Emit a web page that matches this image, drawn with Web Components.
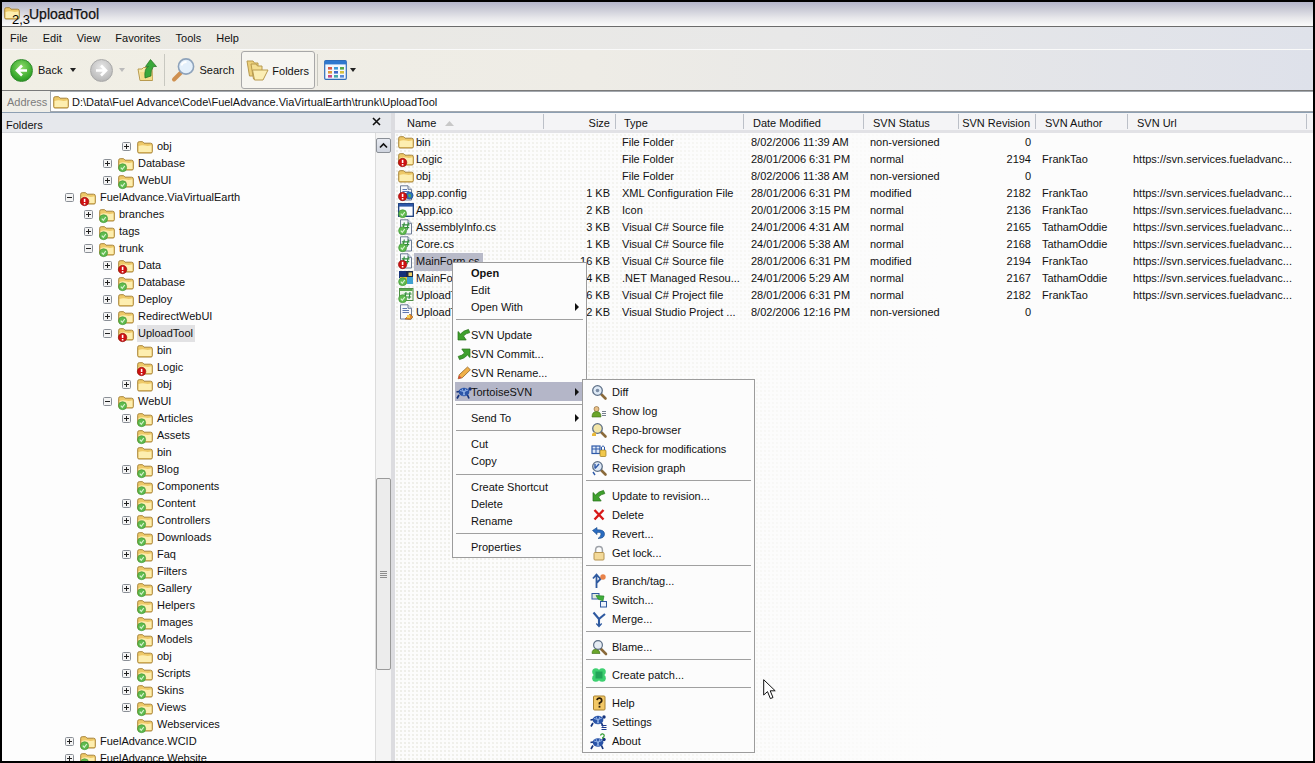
<!DOCTYPE html>
<html>
<head>
<meta charset="utf-8">
<title>UploadTool</title>
<style>
  html, body { margin: 0; height: 763px; overflow: hidden; background: #000; }
  body { padding: 2px 2px 2px 2px; box-sizing: border-box; font: 11px "Liberation Sans", "Noto Sans", sans-serif; color: #111; }
</style>
</head>
<body>
<explorer-window>
  <title-bar>UploadTool</title-bar>
  <menu-bar>
    <span>File</span><span>Edit</span><span>View</span><span>Favorites</span><span>Tools</span><span>Help</span>
  </menu-bar>
  <tool-bar></tool-bar>
  <address-bar>D:\Data\Fuel Advance\Code\FuelAdvance.ViaVirtualEarth\trunk\UploadTool</address-bar>
  <tree-pane slot="tree">
    <tree-row depth="3" toggle="plus">obj</tree-row>
    <tree-row depth="2" toggle="plus" badge="ok">Database</tree-row>
    <tree-row depth="2" toggle="plus" badge="ok">WebUI</tree-row>
    <tree-row depth="0" toggle="minus" badge="err">FuelAdvance.ViaVirtualEarth</tree-row>
    <tree-row depth="1" toggle="plus" badge="ok">branches</tree-row>
    <tree-row depth="1" toggle="plus" badge="ok">tags</tree-row>
    <tree-row depth="1" toggle="minus" badge="ok">trunk</tree-row>
    <tree-row depth="2" toggle="plus" badge="err">Data</tree-row>
    <tree-row depth="2" toggle="plus" badge="ok">Database</tree-row>
    <tree-row depth="2" toggle="plus">Deploy</tree-row>
    <tree-row depth="2" toggle="plus" badge="ok">RedirectWebUI</tree-row>
    <tree-row depth="2" toggle="minus" badge="err" selected>UploadTool</tree-row>
    <tree-row depth="3">bin</tree-row>
    <tree-row depth="3" badge="err">Logic</tree-row>
    <tree-row depth="3" toggle="plus">obj</tree-row>
    <tree-row depth="2" toggle="minus" badge="ok">WebUI</tree-row>
    <tree-row depth="3" toggle="plus" badge="ok">Articles</tree-row>
    <tree-row depth="3" badge="ok">Assets</tree-row>
    <tree-row depth="3">bin</tree-row>
    <tree-row depth="3" toggle="plus" badge="ok">Blog</tree-row>
    <tree-row depth="3" badge="ok">Components</tree-row>
    <tree-row depth="3" toggle="plus" badge="ok">Content</tree-row>
    <tree-row depth="3" toggle="plus" badge="ok">Controllers</tree-row>
    <tree-row depth="3" badge="ok">Downloads</tree-row>
    <tree-row depth="3" toggle="plus" badge="ok">Faq</tree-row>
    <tree-row depth="3" badge="ok">Filters</tree-row>
    <tree-row depth="3" toggle="plus" badge="ok">Gallery</tree-row>
    <tree-row depth="3" badge="ok">Helpers</tree-row>
    <tree-row depth="3" badge="ok">Images</tree-row>
    <tree-row depth="3" badge="ok">Models</tree-row>
    <tree-row depth="3" toggle="plus">obj</tree-row>
    <tree-row depth="3" toggle="plus" badge="ok">Scripts</tree-row>
    <tree-row depth="3" toggle="plus" badge="ok">Skins</tree-row>
    <tree-row depth="3" toggle="plus" badge="ok">Views</tree-row>
    <tree-row depth="3" badge="ok">Webservices</tree-row>
    <tree-row depth="0" toggle="plus" badge="ok">FuelAdvance.WCID</tree-row>
    <tree-row depth="0" toggle="plus" badge="ok">FuelAdvance.Website</tree-row>
  </tree-pane>
  <file-list slot="list">
    <file-row icon="folder"><span>bin</span><span></span><span>File Folder</span><span>8/02/2006 11:39 AM</span><span>non-versioned</span><span>0</span><span></span><span></span></file-row>
    <file-row icon="folder" badge="err"><span>Logic</span><span></span><span>File Folder</span><span>28/01/2006 6:31 PM</span><span>normal</span><span>2194</span><span>FrankTao</span><span>https://svn.services.fueladvanc...</span></file-row>
    <file-row icon="folder"><span>obj</span><span></span><span>File Folder</span><span>8/02/2006 11:38 AM</span><span>non-versioned</span><span>0</span><span></span><span></span></file-row>
    <file-row icon="config" badge="err"><span>app.config</span><span>1 KB</span><span>XML Configuration File</span><span>28/01/2006 6:31 PM</span><span>modified</span><span>2182</span><span>FrankTao</span><span>https://svn.services.fueladvanc...</span></file-row>
    <file-row icon="ico" badge="ok"><span>App.ico</span><span>2 KB</span><span>Icon</span><span>20/01/2006 3:15 PM</span><span>normal</span><span>2136</span><span>FrankTao</span><span>https://svn.services.fueladvanc...</span></file-row>
    <file-row icon="cs" badge="ok"><span>AssemblyInfo.cs</span><span>3 KB</span><span>Visual C# Source file</span><span>24/01/2006 4:31 AM</span><span>normal</span><span>2165</span><span>TathamOddie</span><span>https://svn.services.fueladvanc...</span></file-row>
    <file-row icon="cs" badge="ok"><span>Core.cs</span><span>1 KB</span><span>Visual C# Source file</span><span>24/01/2006 5:38 AM</span><span>normal</span><span>2168</span><span>TathamOddie</span><span>https://svn.services.fueladvanc...</span></file-row>
    <file-row icon="cs" badge="err" selected><span>MainForm.cs</span><span>16 KB</span><span>Visual C# Source file</span><span>28/01/2006 6:31 PM</span><span>modified</span><span>2194</span><span>FrankTao</span><span>https://svn.services.fueladvanc...</span></file-row>
    <file-row icon="resx" badge="ok"><span>MainFor</span><span>24 KB</span><span>.NET Managed Resou...</span><span>24/01/2006 5:29 AM</span><span>normal</span><span>2167</span><span>TathamOddie</span><span>https://svn.services.fueladvanc...</span></file-row>
    <file-row icon="csproj" badge="ok"><span>UploadT</span><span>6 KB</span><span>Visual C# Project file</span><span>28/01/2006 6:31 PM</span><span>normal</span><span>2182</span><span>FrankTao</span><span>https://svn.services.fueladvanc...</span></file-row>
    <file-row icon="user"><span>UploadT</span><span>2 KB</span><span>Visual Studio Project ...</span><span>8/02/2006 12:16 PM</span><span>non-versioned</span><span>0</span><span></span><span></span></file-row>
  </file-list>
</explorer-window>

<context-menu style="left:452px;top:262px;width:129px;padding-top:1px;--icon-col:16px;--icon-pad:1px;--arrow-right:5px">
  <menu-item bold>Open</menu-item>
  <menu-item>Edit</menu-item>
  <menu-item arrow>Open With</menu-item>
  <menu-sep style="--before:4px"></menu-sep>
  <menu-item icon="update" tall>SVN Update</menu-item>
  <menu-item icon="commit" tall>SVN Commit...</menu-item>
  <menu-item icon="pencil" tall>SVN Rename...</menu-item>
  <menu-item icon="turtle" tall arrow hot>TortoiseSVN</menu-item>
  <menu-sep style="--after:4px"></menu-sep>
  <menu-item arrow>Send To</menu-item>
  <menu-sep style="--before:4px;--after:4px"></menu-sep>
  <menu-item>Cut</menu-item>
  <menu-item>Copy</menu-item>
  <menu-sep style="--before:5px;--after:3px"></menu-sep>
  <menu-item>Create Shortcut</menu-item>
  <menu-item>Delete</menu-item>
  <menu-item>Rename</menu-item>
  <menu-sep style="--before:4px;--after:4px"></menu-sep>
  <menu-item>Properties</menu-item>
</context-menu>

<context-menu style="left:582px;top:379px;width:167px;--icon-col:27px;--icon-pad:6px">
  <menu-item icon="diff" tall>Diff</menu-item>
  <menu-item icon="log" tall>Show log</menu-item>
  <menu-item icon="repo" tall>Repo-browser</menu-item>
  <menu-item icon="check" tall>Check for modifications</menu-item>
  <menu-item icon="graph" tall>Revision graph</menu-item>
  <menu-sep></menu-sep>
  <menu-item icon="update" tall>Update to revision...</menu-item>
  <menu-item icon="del" tall>Delete</menu-item>
  <menu-item icon="revert" tall>Revert...</menu-item>
  <menu-item icon="lock" tall>Get lock...</menu-item>
  <menu-sep></menu-sep>
  <menu-item icon="branch" tall>Branch/tag...</menu-item>
  <menu-item icon="switch" tall>Switch...</menu-item>
  <menu-item icon="merge" tall>Merge...</menu-item>
  <menu-sep></menu-sep>
  <menu-item icon="blame" tall>Blame...</menu-item>
  <menu-sep></menu-sep>
  <menu-item icon="patch" tall>Create patch...</menu-item>
  <menu-sep></menu-sep>
  <menu-item icon="help" tall>Help</menu-item>
  <menu-item icon="settings" tall>Settings</menu-item>
  <menu-item icon="about" tall>About</menu-item>
</context-menu>

<mouse-cursor></mouse-cursor>

<script>
const FOLDER = `<path d="M.7 4.2Q.7 2.7 2.2 2.7H5.6L7 4.2H13.6Q15.3 4.2 15.3 5.8V12.8Q15.3 14 14 14H2Q.7 14 .7 12.8Z" fill="#eec968" stroke="#a9853a"/>
  <path d="M1.6 7Q5 5.6 8 6.6T14.5 6.2V13H1.6Z" fill="#fdeeb0"/>`;

const PAGE = `<path d="M2.5 .8H10L13.5 4.3V15H2.5Z" fill="#f6f8fb" stroke="#6d7b94"/><path d="M10 .8V4.3H13.5" fill="#dfe6f0" stroke="#6d7b94"/>`;

const TURTLE = `<ellipse cx="8" cy="8" rx="5.4" ry="4.2" fill="#2a54a8"/><path d="M4 6.5Q8 9 12 6M6 4.5L9 11.5M10 4.5L7 11.5" stroke="#8fb0e6" fill="none"/>
  <circle cx="14" cy="5" r="1.7" fill="#14337c"/><path d="M3 11L1 14.5M11.5 11L13 14.5M3 7.5L.5 8" stroke="#14337c" stroke-width="1.7"/>`;

const GLASS = (fill) => `<path d="M9.5 9.5L14.5 14.5" stroke="#8a6a3a" stroke-width="2.6" stroke-linecap="round"/><circle cx="6.5" cy="6.5" r="4.8" fill="${fill}" stroke="#5d6f86" stroke-width="1.3"/>`;

const ARROW = `<path d="M2 13V4.5L4.6 7Q7 3.6 12.5 2.4L13.8 5.6Q9.6 6.4 7.5 9L10.2 13Z" fill="#3ea02c" stroke="#276f1a" stroke-width=".7"/>`;

const ICONS = {
  folder: FOLDER,
  config: PAGE + `<path d="M4.5 4.5H9M4.5 6.5H11M4.5 8.5H8" stroke="#5d78b0"/><circle cx="11.5" cy="10.5" r="3.6" fill="#2a6fc0" stroke="#16407c" stroke-width=".6"/><path d="M10 9.5L12.5 9L13 12L11 12.5Z" fill="#58b050"/>`,
  ico: `<rect x=".7" y="1.7" width="14.6" height="12.6" fill="#fafcff" stroke="#183b7c" stroke-width="1.3"/><rect x="1" y="2" width="14" height="2.6" fill="#2c57a8"/>`,
  cs: PAGE + `<path d="M6.3 3.5L5 11M10.3 3.5L9 11M3.8 5.8H11.5M3.5 8.6H11.2" stroke="#2e8b3a" stroke-width="1.2"/>`,
  resx: `<rect x="1" y="1" width="7" height="7" fill="#16327a"/><rect x="8" y="1" width="7" height="7" fill="#1d2a4c"/><rect x="2" y="7" width="7" height="7" fill="#e8c23a"/><rect x="9" y="7" width="6" height="7" fill="#3fa0d0"/><rect x="10.5" y="2.5" width="3.5" height="3.5" fill="#f0d060"/>`,
  csproj: `<rect x="1.5" y="1.5" width="13.5" height="12" fill="#f0f6ea" stroke="#4f8f46"/><rect x="2" y="2" width="12.5" height="2" fill="#5aa84e"/><path d="M8 5L7 12M12 5L11 12M5.8 7H13.6M5.4 10H13.2" stroke="#2e8b3a" stroke-width="1.1"/>`,
  user: PAGE + `<path d="M4.5 4.5H9M4.5 6.5H11M4.5 8.5H11" stroke="#5d78b0"/><path d="M7 15L12 10L15 13L12.5 15.5Z" fill="#e08a2a" stroke="#9a5a18" stroke-width=".6"/><rect x="9" y="11" width="3" height="3" fill="#f2cf56"/>`,
  update: ARROW,
  commit: `<g transform="rotate(180 8 8)">${ARROW}</g>`,
  pencil: `<path d="M2.2 13.8L3.2 9.8L11.5 2L14.4 4.8L6.2 12.8Z" fill="#f0b048" stroke="#8f6424" stroke-width=".8"/><path d="M2.2 13.8L3.2 10.4L5.6 12.8Z" fill="#e0483a"/>`,
  turtle: TURTLE,
  diff: GLASS('#dfeaf6') + `<circle cx="6.5" cy="6.5" r="1.8" fill="#7c8ea6"/>`,
  log: `<circle cx="5.5" cy="6" r="2.5" fill="#e9c18a" stroke="#7c5a28" stroke-width=".6"/><path d="M1 14Q1 8.6 5.5 8.6T10 14Z" fill="#6aa52a" stroke="#3c6c14" stroke-width=".6"/><path d="M11 8.5H15M11 10.5H15M11 12.5H15" stroke="#76808e"/>`,
  repo: GLASS('#f3e6a8') + `<path d="M1 12Q3 9 5 11V14H1Z" fill="#e7b83a"/>`,
  check: `<rect x="1" y="5" width="8" height="7.5" fill="#dfe9f8" stroke="#2f5aa8" stroke-width="1.2"/><path d="M1 8H9M5 5V12" stroke="#2f5aa8"/><rect x="9" y="9" width="6" height="6.5" rx="1" fill="#f1c84c" stroke="#9a7a1c" stroke-width=".7"/><path d="M10.5 9V6Q12 3.6 13.5 6V9" fill="none" stroke="#2f5aa8"/>`,
  graph: GLASS('#dde8f6') + `<path d="M4 4L4 8.5M8 4L4 8.5M2 12L4 15" stroke="#2f5aa8" stroke-width="1.4"/>`,
  del: `<path d="M3.5 3L12.5 12.5M12.5 3L3.5 12.5" stroke="#d81818" stroke-width="2.4"/>`,
  revert: `<path d="M1.5 4.5L6 1.5V3.8Q13.5 3.5 13.5 8T7 12.5Q10.5 10 10 7.8T6 6.5V8.6Z" fill="#2a6cc0" stroke="#164684" stroke-width=".6"/>`,
  lock: `<path d="M4.6 8V5Q4.6 1.4 8 1.4T11.4 5V8" fill="none" stroke="#9ea2a8" stroke-width="1.5"/><rect x="3" y="7.5" width="10" height="7.5" rx="1" fill="#f3d998" stroke="#b59450"/>`,
  branch: `<path d="M5.5 15V2.5M2 5.5L5.5 1.5L9 5.5M5.5 10L10.5 5" fill="none" stroke="#2f5aa0" stroke-width="1.8"/><circle cx="12" cy="4" r="2.7" fill="#e8824a"/>`,
  switch: `<rect x="1" y="1.5" width="7" height="5.5" fill="#dfeadf" stroke="#2f5aa0"/><rect x="9.5" y="9.5" width="6" height="5.5" fill="#eef3fb" stroke="#2f5aa0"/><path d="M5 3.5L13 4L12 9L7 7Z" fill="#3fae3a" stroke="#227a22" stroke-width=".6"/>`,
  merge: `<path d="M2.5 1.5L8 8M14 3L8 8V15" fill="none" stroke="#2f5aa0" stroke-width="2.1"/><path d="M5.3 12.5L8 15.5L10.7 12.5" fill="none" stroke="#2f5aa0" stroke-width="1.3"/>`,
  blame: `<path d="M9.5 9.5L15 15" stroke="#8a6a3a" stroke-width="2.6" stroke-linecap="round"/><circle cx="7" cy="6" r="4.4" fill="#e6ecf4" stroke="#5d6f86" stroke-width="1.2"/><path d="M1 14.5Q1 10 5 10.4T9 14.5Z" fill="#6aa52a" stroke="#3c6c14" stroke-width=".6"/>`,
  patch: `<circle cx="4.8" cy="4.8" r="3.6" fill="#3dd070"/><circle cx="11.2" cy="4.8" r="3.6" fill="#3dd070"/><circle cx="4.8" cy="11.2" r="3.6" fill="#3dd070"/><circle cx="11.2" cy="11.2" r="3.6" fill="#3dd070"/><rect x="4.5" y="4.5" width="7" height="7" fill="#22a458"/>`,
  help: `<rect x="2.5" y="1" width="11.5" height="14" rx="1" fill="#f3c866" stroke="#a8812e"/><path d="M6 5.2Q6.4 3.2 8.4 3.2T10.7 5.2T8.5 8V9.6" fill="none" stroke="#2a1c08" stroke-width="1.7"/><rect x="7.6" y="10.8" width="1.8" height="1.8" fill="#2a1c08"/>`,
  settings: `<g transform="translate(-1 -2)">${TURTLE}</g><path d="M10.5 11.5H15.5M10.5 13.5H15.5M10.5 15.5H15.5" stroke="#1d3a8c"/>`,
  about: `<g transform="translate(-1 1.5)">${TURTLE}</g><path d="M9.5 2.5Q10 .7 11.6 .8T13.2 2.5T11.7 4.6V5.8" fill="none" stroke="#2c9a2c" stroke-width="1.2"/>`,
  up: `<path d="M1 11H5L6.5 9.5H15L15.5 22.5H3Z" fill="#f8e9a8" stroke="#b89a4e"/><path d="M3 14H15L15.5 22H4Z" fill="#f2d676" opacity=".6"/><path d="M8 20Q7 10 11.5 8.5H8.5L13.5 1.5L19.5 8.5H16.5Q13.5 12 14 18Z" fill="#3aa83a" stroke="#1f6e1f" stroke-width=".7"/>`,
  search: `<path d="M10 14.5L3 21.5" stroke="#cf9050" stroke-width="4" stroke-linecap="round"/><circle cx="15" cy="8.5" r="7.6" fill="#e4f0fb" stroke="#8ea3bb" stroke-width="1.6"/><path d="M10.5 7.5Q11.5 4 15.5 4" fill="none" stroke="#fff" stroke-width="1.8"/>`,
  folders: `<path d="M1 2H7L8.5 4H12V17H3.5Z" fill="#ecd07a" stroke="#b89a4e"/><path d="M5 5H10L11.5 7H16V20H7.5Z" fill="#f4de92" stroke="#b89a4e"/><path d="M6.5 11H22L17 21H8.5Z" fill="#fbeeb4" stroke="#b89a4e"/>`,
  views: `<rect x=".7" y=".7" width="21.6" height="18.6" rx="1" fill="#f4f8fd" stroke="#2f6cb8" stroke-width="1.2"/><rect x="1" y="1" width="21" height="3.4" fill="#2f78cf"/>
    <g><rect x="4" y="7" width="4" height="2.6" fill="#d85a4a"/><rect x="10" y="7" width="4" height="2.6" fill="#3f9ad8"/><rect x="16" y="7" width="4" height="2.6" fill="#58a848"/>
    <rect x="4" y="11" width="4" height="2.6" fill="#e09a3a"/><rect x="10" y="11" width="4" height="2.6" fill="#3f68c8"/><rect x="16" y="11" width="4" height="2.6" fill="#d8c040"/>
    <rect x="4" y="15" width="4" height="2.6" fill="#c84a88"/><rect x="10" y="15" width="4" height="2.6" fill="#48a8a8"/><rect x="16" y="15" width="4" height="2.6" fill="#5a8ad8"/></g>`
};

const BADGES = {
  ok: `<circle cx="4.6" cy="11.7" r="4" fill="#5fbb4e" stroke="#3b8f30" stroke-width=".6"/><path d="M2.8 11.6L4.3 13.4L6.8 10" fill="none" stroke="#d8f2d2" stroke-width="1.2"/>`,
  err: `<circle cx="4.6" cy="11.5" r="4.2" fill="#cf1111" stroke="#8c0808" stroke-width=".6"/><path d="M4.6 8.8V12" stroke="#fff" stroke-width="1.6"/><rect x="3.8" y="13" width="1.6" height="1.5" fill="#fff"/>`
};

class XpIcon extends HTMLElement {
  connectedCallback() {
    const name = this.getAttribute('name');
    const w = this.getAttribute('w') || 16;
    const h = this.getAttribute('h') || 16;
    const badge = BADGES[this.getAttribute('badge')] || '';
    this.attachShadow({ mode: 'open' }).innerHTML = `
      <style>
        :host { display: block; flex: none; width: ${w}px; height: ${h}px; }
        svg { display: block; overflow: visible; }
      </style>
      <svg width="${w}" height="${h}" viewBox="0 0 ${w} ${h}">${ICONS[name] || ''}${badge}</svg>`;
  }
}
customElements.define('xp-icon', XpIcon);

class ExplorerWindow extends HTMLElement {
  constructor() {
    super();
    this.attachShadow({ mode: 'open' }).innerHTML = `
      <style>
        :host { display: flex; flex-direction: column; height: 759px; background: #fcfcfc; overflow: hidden; }
        .main { flex: 1; display: flex; min-height: 0; }
        .split { width: 4px; flex: none; background: #dcdce0; }
      </style>
      <slot></slot>
      <div class="main">
        <slot name="tree"></slot>
        <div class="split"></div>
        <slot name="list"></slot>
      </div>`;
  }
}
customElements.define('explorer-window', ExplorerWindow);

class TitleBar extends HTMLElement {
  constructor() {
    super();
    this.attachShadow({ mode: 'open' }).innerHTML = `
      <style>
        :host { display: flex; align-items: center; position: relative; height: 24px; flex: none; border-bottom: 1px solid #6b6b6b;
          background: linear-gradient(#b4b5cb, #c6c7d4 25%, #e6e6ea 65%, #fbfbfb); padding-left: 27px; font-size: 14px; color: #111; }
        xp-icon { position: absolute; left: 2px; top: 3px; }
        .tip { position: absolute; left: 10px; top: 10px; font-size: 13px; line-height: 15px; color: #000; }
        .t { -webkit-text-stroke: .25px #111; }
      </style>
      <xp-icon name="folder"></xp-icon>
      <span class="tip">2,3</span>
      <span class="t"><slot></slot></span>`;
  }
}
customElements.define('title-bar', TitleBar);

class MenuBar extends HTMLElement {
  constructor() {
    super();
    this.attachShadow({ mode: 'open' }).innerHTML = `
      <style>
        :host { display: flex; align-items: center; gap: 15px; height: 22px; flex: none; padding-left: 8px; border-bottom: 1px solid #fafafa;
          background: linear-gradient(90deg, #eceae2, #e8e8e8 60%, #dfe2ea); }
      </style>
      <slot></slot>`;
  }
}
customElements.define('menu-bar', MenuBar);

class ToolBar extends HTMLElement {
  constructor() {
    super();
    this.attachShadow({ mode: 'open' }).innerHTML = `
      <style>
        :host { display: flex; align-items: center; height: 40px; flex: none; padding-left: 8px; border-bottom: 1px solid #7a7a7a;
          background: linear-gradient(90deg, #f1efe5, #eeece6 45%, #dee1ea); }
        .round { width: 23px; height: 23px; border-radius: 50%; flex: none; position: relative; box-sizing: border-box; }
        .back { background: radial-gradient(circle at 50% 35%, #8fdc6a, #37a82c 65%, #1f7a1c); border: 1px solid #2f8a2a; }
        .fwd { background: radial-gradient(circle at 50% 35%, #e8e8e8, #bdbdbd 70%, #a0a0a0); border: 1px solid #a8a8a8; margin-left: 14px; }
        .round svg { position: absolute; left: 3px; top: 3px; }
        .caret { width: 0; height: 0; border: 3px solid transparent; border-top: 4px solid #222; border-bottom: 0; flex: none; }
        .lbl { margin-left: 5px; }
        .sep { width: 1px; height: 32px; background: #c8c8c0; flex: none; }
        .btn { display: flex; align-items: center; height: 38px; width: 74px; border: 1px solid #a8a8a8; border-radius: 3px; background: #f6f5f0; box-sizing: border-box; padding-left: 4px; flex: none; margin-left: 7px; }
        .btn span { margin-left: 3px; position: relative; top: 1px; }
      </style>
      <div class="round back"><svg width="15" height="15" viewBox="0 0 15 15"><path d="M13 7.5H4M8 2.5L3 7.5L8 12.5" fill="none" stroke="#fff" stroke-width="2.6"/></svg></div>
      <span class="lbl">Back</span>
      <div class="caret" style="margin-left:8px"></div>
      <div class="round fwd"><svg width="15" height="15" viewBox="0 0 15 15"><path d="M2 7.5H11M7 2.5L12 7.5L7 12.5" fill="none" stroke="#fff" stroke-width="2.6"/></svg></div>
      <div class="caret" style="margin-left:6px;border-top-color:#bbb"></div>
      <xp-icon name="up" w="20" h="24" style="margin-left:12px"></xp-icon>
      <div class="sep" style="margin-left:7px"></div>
      <xp-icon name="search" w="24" h="24" style="margin-left:6px"></xp-icon>
      <span class="lbl" style="margin-left:4px">Search</span>
      <div class="btn"><xp-icon name="folders" w="23" h="23"></xp-icon><span>Folders</span></div>
      <div class="sep" style="margin-left:2px"></div>
      <xp-icon name="views" w="23" h="20" style="margin-left:6px"></xp-icon>
      <div class="caret" style="margin-left:3px"></div>`;
  }
}
customElements.define('tool-bar', ToolBar);

class AddressBar extends HTMLElement {
  constructor() {
    super();
    this.attachShadow({ mode: 'open' }).innerHTML = `
      <style>
        :host { display: flex; align-items: center; height: 21px; flex: none; padding-left: 5px; border-bottom: 1px solid #8d9fb2;
          background: linear-gradient(90deg, #efeee8, #e6e7ea); }
        .lbl { color: #7c7c7c; width: 43px; flex: none; }
        .box { flex: 1; height: 21px; display: flex; align-items: center; background: #fff; border: 1px solid #a3a8ae; border-right: 0; box-sizing: border-box; padding-left: 2px; gap: 3px; }
      </style>
      <span class="lbl">Address</span>
      <div class="box"><xp-icon name="folder"></xp-icon><slot></slot></div>`;
  }
}
customElements.define('address-bar', AddressBar);

class TreePane extends HTMLElement {
  constructor() {
    super();
    this.attachShadow({ mode: 'open' }).innerHTML = `
      <style>
        :host { display: flex; flex-direction: column; width: 389px; flex: none; min-height: 0; }
        .head { height: 20px; flex: none; display: flex; align-items: center; justify-content: space-between; padding: 0 10px 0 4px; background: #e6e8ec; border-bottom: 1px solid #d4d6da; box-sizing: border-box; }
        .head span { margin-top: 4px; }
        .x { width: 9px; height: 9px; margin-top: -2px; }
        .body { flex: 1; display: flex; min-height: 0; background: #fdfdfd; }
        .rows { flex: 1; padding-top: 5px; overflow: hidden; min-width: 0; }
        .bar { width: 16px; flex: none; display: flex; flex-direction: column; padding-top: 5px; box-sizing: border-box; background: #f4f4f4; border-left: 1px solid #dcdcdc; }
        .bar-btn { height: 15px; flex: none; border: 1px solid #8a8f96; border-radius: 2px; background: linear-gradient(#e8ebf2, #cfd4de); display: flex; align-items: center; justify-content: center; box-sizing: border-box; }
        .thumb { height: 192px; margin-top: 325px; flex: none; border: 1px solid #9a9a9a; border-radius: 2px; background: #ececec; box-sizing: border-box; display: flex; align-items: center; justify-content: center; }
        .grip { width: 7px; height: 7px; background: repeating-linear-gradient(#8d8d8d 0 1px, transparent 1px 2px); }
      </style>
      <div class="head">
        <span>Folders</span>
        <svg class="x" viewBox="0 0 9 9"><path d="M1 1L8 8M8 1L1 8" stroke="#111" stroke-width="1.6"/></svg>
      </div>
      <div class="body">
        <div class="rows"><slot></slot></div>
        <div class="bar">
          <div class="bar-btn"><svg width="9" height="7" viewBox="0 0 9 7"><path d="M1 5.5L4.5 2L8 5.5" fill="none" stroke="#111" stroke-width="1.7"/></svg></div>
          <div class="thumb"><div class="grip"></div></div>
        </div>
      </div>`;
  }
}
customElements.define('tree-pane', TreePane);

class TreeRow extends HTMLElement {
  connectedCallback() {
    const depth = +this.getAttribute('depth');
    const toggle = this.getAttribute('toggle');
    const badge = this.getAttribute('badge') || '';
    const mark = toggle === 'plus' ? 'M2 4.5H7M4.5 2V7' : 'M2 4.5H7';
    this.attachShadow({ mode: 'open' }).innerHTML = `
      <style>
        :host { display: flex; align-items: center; height: 17px; padding-left: ${63 + depth * 19}px; white-space: nowrap; }
        .tg { width: 9px; height: 9px; flex: none; margin-right: 6px; }
        xp-icon { margin-right: 3px; }
        .t { padding: 0 1px; line-height: 17px; }
        :host([selected]) .t { background: #e2e2e4; padding-right: 2px; }
      </style>
      ${toggle
        ? `<svg class="tg" viewBox="0 0 9 9"><rect x=".5" y=".5" width="8" height="8" rx="1" fill="#f4f4f4" stroke="#8a8f96"/><path d="${mark}" stroke="#222"/></svg>`
        : '<span class="tg"></span>'}
      <xp-icon name="folder" badge="${badge}"></xp-icon>
      <span class="t"><slot></slot></span>`;
  }
}
customElements.define('tree-row', TreeRow);

class FileList extends HTMLElement {
  constructor() {
    super();
    const cols = [
      ['Name', 148, 11], ['Size', 72, 5, 1], ['Type', 128, 8], ['Date Modified', 120, 9],
      ['SVN Status', 95, 9], ['SVN Revision', 77, 5, 1], ['SVN Author', 92, 9], ['SVN Url', 179, 9]
    ];
    const heads = cols.map(([t, w, pad, right]) => `
      <div class="h" style="width:${w}px;${right ? `justify-content:flex-end;padding-right:${pad}px` : `padding-left:${pad}px`}">${t}${t === 'Name'
        ? '<svg width="9" height="5" viewBox="0 0 9 5" style="margin-left:9px"><path d="M4.5 0L9 5H0Z" fill="#c8c8c8"/></svg>' : ''}</div>`).join('');
    this.attachShadow({ mode: 'open' }).innerHTML = `
      <style>
        :host { flex: 1; min-width: 0; display: flex; flex-direction: column;
          background: linear-gradient(90deg, #fcfcfc00, #fcfcfc 60%), radial-gradient(circle, #eeeee8 .7px, transparent .9px) 0 0 / 4px 4px, #fcfcfc; }
        .head { display: flex; height: 17px; flex: none; background: #f4f4f6; border-bottom: 3px solid #e2e2e6; padding-left: 1px; }
        .h { box-sizing: border-box; display: flex; align-items: center; border-right: 1px solid #bcc0c8; white-space: nowrap; margin: 1px 0; padding-top: 3px; }
        .rows { padding-top: 1px; }
      </style>
      <div class="head">${heads}</div>
      <div class="rows"><slot></slot></div>`;
  }
}
customElements.define('file-list', FileList);

class FileRow extends HTMLElement {
  connectedCallback() {
    const icon = this.getAttribute('icon');
    const badge = this.getAttribute('badge') || '';
    this.attachShadow({ mode: 'open' }).innerHTML = `
      <style>
        :host { display: block; position: relative; height: 17px; white-space: nowrap; }
        .g { display: grid; grid-template-columns: 149px 72px 128px 120px 95px 77px 92px 179px; line-height: 17px; position: relative; }
        xp-icon { position: absolute; left: 3px; top: 0; }
        ::slotted(span) { box-sizing: border-box; padding-left: 6px; overflow: hidden; }
        ::slotted(span:nth-child(1)) { padding-left: 21px; overflow: visible; }
        ::slotted(span:nth-child(2)) { padding: 0 6px 0 0; text-align: right; }
        ::slotted(span:nth-child(4)) { padding-left: 7px; }
        ::slotted(span:nth-child(6)) { padding: 0 5px 0 0; text-align: right; }
        ::slotted(span:nth-child(8)) { padding-left: 5px; overflow: visible; }
        .sel { position: absolute; left: 19px; top: 0; height: 18px; width: 69px; background: #b8bac8; }
      </style>
      ${this.hasAttribute('selected') ? '<div class="sel"></div>' : ''}
      <xp-icon name="${icon}" badge="${badge}"></xp-icon>
      <div class="g"><slot></slot></div>`;
  }
}
customElements.define('file-row', FileRow);

class ContextMenu extends HTMLElement {
  constructor() {
    super();
    this.attachShadow({ mode: 'open' }).innerHTML = `
      <style>
        :host { position: absolute; display: block; box-sizing: content-box; padding: 2px; background: #fcfcfc; border: 1px solid #9c9c9c; }
      </style>
      <slot></slot>`;
  }
}
customElements.define('context-menu', ContextMenu);

class MenuItem extends HTMLElement {
  connectedCallback() {
    const icon = this.getAttribute('icon');
    const tall = this.hasAttribute('tall');
    this.attachShadow({ mode: 'open' }).innerHTML = `
      <style>
        :host { display: flex; align-items: center; height: ${tall ? 19 : 17}px; position: relative; white-space: nowrap; }
        :host([hot]) { background: #b4b6c8; }
        :host([bold]) { font-weight: 700; }
        .ic { width: var(--icon-col); box-sizing: border-box; padding-left: var(--icon-pad); flex: none; }
        .arrow { position: absolute; right: var(--arrow-right, 5px); top: 50%; margin-top: -4px; width: 0; height: 0; border: 4px solid transparent; border-left: 4px solid #111; border-right: 0; }
      </style>
      <div class="ic">${icon ? `<xp-icon name="${icon}"></xp-icon>` : ''}</div>
      <span class="t"><slot></slot></span>
      ${this.hasAttribute('arrow') ? '<div class="arrow"></div>' : ''}`;
  }
}
customElements.define('menu-item', MenuItem);

class MenuSep extends HTMLElement {
  constructor() {
    super();
    this.attachShadow({ mode: 'open' }).innerHTML = `
      <style>
        :host { display: block; padding: var(--before, 3px) 1px var(--after, 5px); }
        div { height: 1px; background: #a0a0a0; }
      </style>
      <div></div>`;
  }
}
customElements.define('menu-sep', MenuSep);

class MouseCursor extends HTMLElement {
  constructor() {
    super();
    this.attachShadow({ mode: 'open' }).innerHTML = `
      <style>:host { position: absolute; left: 763px; top: 679px; display: block; width: 14px; height: 22px; }</style>
      <svg width="14" height="22" viewBox="0 0 14 22"><path d="M.7 .7V16L4.5 12.6L7.4 19.6L10 18.5L7.2 11.8H12.2Z" fill="#fff" stroke="#111"/></svg>`;
  }
}
customElements.define('mouse-cursor', MouseCursor);
</script>
</body>
</html>
